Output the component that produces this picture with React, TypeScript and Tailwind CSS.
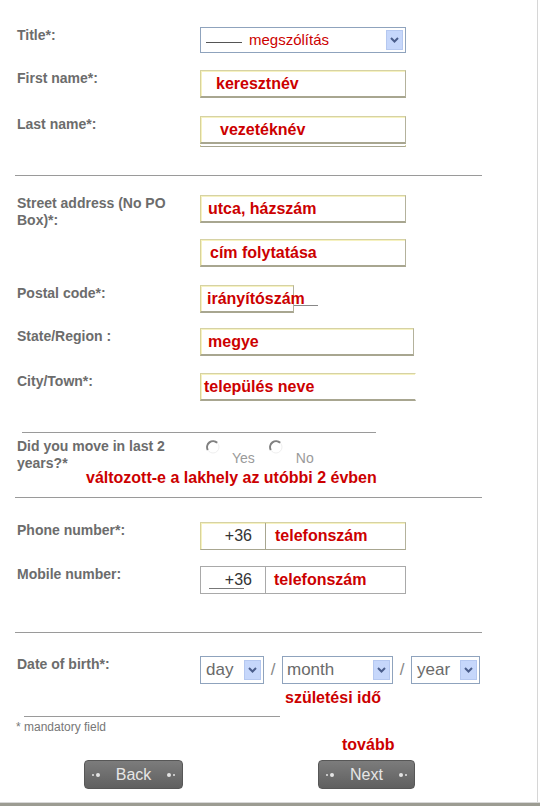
import type { ReactNode } from "react";

const font = { fontFamily: '"Liberation Sans", Arial, sans-serif' };

const Row = ({ label, className = "", children }: { label: ReactNode; className?: string; children: ReactNode }) => (
  <div className={`flex ${className}`}>
    <div className="w-[200px] shrink-0 pl-[17px]">
      <div className="w-[165px] text-[14px] leading-[17px] font-bold text-[#6c6c6c]">{label}</div>
    </div>
    {children}
  </div>
);

const Field = ({ w, pl, children, open }: { w: string; pl: string; children: ReactNode; open?: boolean }) => (
  <div
    className={`h-[28px] ${w} ${pl} flex items-center border border-t-[#d6d2a4] border-l-[#d8d39a] border-b-2 border-b-[#a8a690] ${
      open ? "border-r-transparent" : "border-r-[#b4b29c]"
    } bg-white shadow-[inset_1px_1px_0_#f6f2c0] text-[16px] font-bold text-[#cc0000]`}
  >
    {children}
  </div>
);

const Chevron = () => (
  <div className="w-[17px] h-[20px] bg-[#c6d7fb] border border-[#b5c8f0] flex items-center justify-center">
    <svg width="9" height="6" viewBox="0 0 9 6">
      <path d="M1 1 L4.5 4.5 L8 1" fill="none" stroke="#4b5e8c" strokeWidth="2" />
    </svg>
  </div>
);

const Select = ({ w, children }: { w: string; children: ReactNode }) => (
  <div className={`h-[28px] ${w} flex items-center border border-[#8fa3bd] bg-white pr-[2px]`}>
    <div className="flex-1 min-w-0 flex items-center">{children}</div>
    <Chevron />
  </div>
);

const Sep = ({ className }: { className: string }) => <div className={`h-[1px] bg-[#9a9a9a] ${className}`} />;

const Radio = () => (
  <svg width="14" height="14" viewBox="0 0 14 14" className="shrink-0">
    <circle cx="7" cy="7" r="6" fill="white" stroke="#efefef" strokeWidth="1" />
    <path d="M11.2 2.8 A6 6 0 0 0 1.8 10" fill="none" stroke="#808080" strokeWidth="2" />
  </svg>
);

const Dots = ({ flip }: { flip?: boolean }) => (
  <span className={`flex items-center gap-[2px] ${flip ? "flex-row-reverse" : ""}`}>
    <span className="w-[2px] h-[2px] rounded-full bg-[#e4e4e4]" />
    <span className="w-[4px] h-[4px] rounded-full bg-[#e4e4e4]" />
  </span>
);

const Button = ({ w, children }: { w: string; children: ReactNode }) => (
  <div
    className={`${w} h-[29px] rounded-[4px] bg-gradient-to-b from-[#7c7c7c] to-[#606060] border border-[#575757] flex items-center justify-between px-[7px] text-[16px] text-[#e6e6e6]`}
  >
    <Dots />
    <span>{children}</span>
    <Dots flip />
  </div>
);

export default function App() {
  return (
    <div className="w-[540px] h-[808px] bg-white relative overflow-hidden" style={font}>
      <div className="w-[538px] border-r border-[#d6d6d6] pt-[27px] h-[802px]">
        <Row label="Title*:" className="h-[26px]">
          <div className="w-[206px] h-[26px] flex items-center border border-[#8fa3bd] bg-white pr-[2px]">
            <div className="flex-1 flex items-center">
              <span className="ml-[5px] w-[36px] h-[1px] bg-[#555] mt-[4px]" />
              <span className="ml-[7px] text-[15px] text-[#cc0000]">megszólítás</span>
            </div>
            <Chevron />
          </div>
        </Row>

        <Row label="First name*:" className="mt-[17px]">
          <Field w="w-[206px]" pl="pl-[15px]">keresztnév</Field>
        </Row>

        <Row label="Last name*:" className="mt-[18px]">
          <div className="flex flex-col">
            <Field w="w-[206px]" pl="pl-[19px]">vezetéknév</Field>
            <div className="w-[206px] h-[2px] mt-[1px] border-x border-[#d8d39a] border-b border-b-[#a8a690]" />
          </div>
        </Row>

        <Sep className="mt-[28px] ml-[15px] w-[467px]" />

        <Row label="Street address (No PO Box)*:" className="mt-[19px] h-[28px]">
          <Field w="w-[206px]" pl="pl-[7px]">utca, házszám</Field>
        </Row>

        <Row label="" className="mt-[16px] h-[28px]">
          <Field w="w-[206px]" pl="pl-[9px]">cím folytatása</Field>
        </Row>

        <Row label="Postal code*:" className="mt-[18px] h-[28px]">
          <div className="flex items-end">
            <Field w="w-[94px] overflow-visible whitespace-nowrap" pl="pl-[6px]">irányítószám</Field>
            <div className="w-[24px] h-[1px] bg-[#888] mb-[7px]" />
          </div>
        </Row>

        <Row label="State/Region :" className="mt-[15px] h-[28px]">
          <Field w="w-[214px]" pl="pl-[7px]">megye</Field>
        </Row>

        <Row label="City/Town*:" className="mt-[17px] h-[28px]">
          <Field w="w-[216px]" pl="pl-[3px]" open>
            település neve
          </Field>
        </Row>

        <Sep className="mt-[31px] ml-[22px] w-[354px]" />

        <Row label="Did you move in last 2 years?*" className="mt-[5px] h-[31px]">
          <div className="flex items-start pt-[2px] pl-[6px] text-[14px] text-[#9a9a9a]">
            <Radio />
            <span className="ml-[12px] mt-[8px]">Yes</span>
            <span className="ml-[14px]"><Radio /></span>
            <span className="ml-[13px] mt-[8px]">No</span>
          </div>
        </Row>

        <div className="pl-[86px] text-[16px] leading-[18px] font-bold text-[#cc0000]">
          változott-e a lakhely az utóbbi 2 évben
        </div>

        <Sep className="mt-[10px] ml-[15px] w-[467px]" />

        <Row label="Phone number*:" className="mt-[24px] h-[28px]">
          <div className="flex h-[28px] w-[206px] border border-t-[#d6d2a4] border-l-[#d8d39a] border-b-[#a8a690] border-r-[#b4b29c] shadow-[inset_1px_1px_0_#f6f2c0]">
            <div className="w-[65px] flex items-center justify-end pr-[13px] text-[16px] text-[#333] border-r border-[#a8a690]">+36</div>
            <div className="flex-1 flex items-center pl-[9px] text-[16px] font-bold text-[#cc0000]">telefonszám</div>
          </div>
        </Row>

        <Row label="Mobile number:" className="mt-[16px] h-[28px]">
          <div className="flex h-[28px] w-[206px] border border-[#a9a9a9]">
            <div className="relative w-[65px] flex items-center justify-end pr-[13px] text-[16px] text-[#333] border-r border-[#a9a9a9]">
              +36
              <span className="absolute left-[8px] bottom-[4px] w-[35px] h-[1px] bg-[#777]" />
            </div>
            <div className="flex-1 flex items-center pl-[8px] text-[16px] font-bold text-[#cc0000]">telefonszám</div>
          </div>
        </Row>

        <Sep className="mt-[38px] ml-[15px] w-[467px]" />

        <Row label="Date of birth*:" className="mt-[23px] h-[28px]">
          <div className="flex items-center text-[17px] text-[#6a6a6a]">
            <Select w="w-[64px]">
              <span className="pl-[5px]">day</span>
            </Select>
            <span className="w-[18px] text-center text-[#888]">/</span>
            <Select w="w-[111px]">
              <span className="pl-[4px]">month</span>
            </Select>
            <span className="w-[18px] text-center text-[#888]">/</span>
            <Select w="w-[69px]">
              <span className="pl-[5px]">year</span>
            </Select>
          </div>
        </Row>

        <div className="mt-[5px] pl-[285px] text-[16px] leading-[18px] font-bold text-[#cc0000]">születési idő</div>

        <Sep className="mt-[9px] ml-[24px] w-[256px]" />

        <div className="mt-[3px] pl-[16px] text-[12px] leading-[14px] text-[#777]">* mandatory field</div>

        <div className="mt-[2px] pl-[342px] text-[16px] leading-[18px] font-bold text-[#cc0000]">tovább</div>

        <div className="mt-[6px] flex">
          <div className="ml-[84px]">
            <Button w="w-[99px]">Back</Button>
          </div>
          <div className="ml-[135px]">
            <Button w="w-[97px]">Next</Button>
          </div>
        </div>
      </div>
      <div className="h-[1px] bg-[#d8d8d8]" />
      <div className="h-[3px] bg-[#9c9c92]" />
    </div>
  );
}
